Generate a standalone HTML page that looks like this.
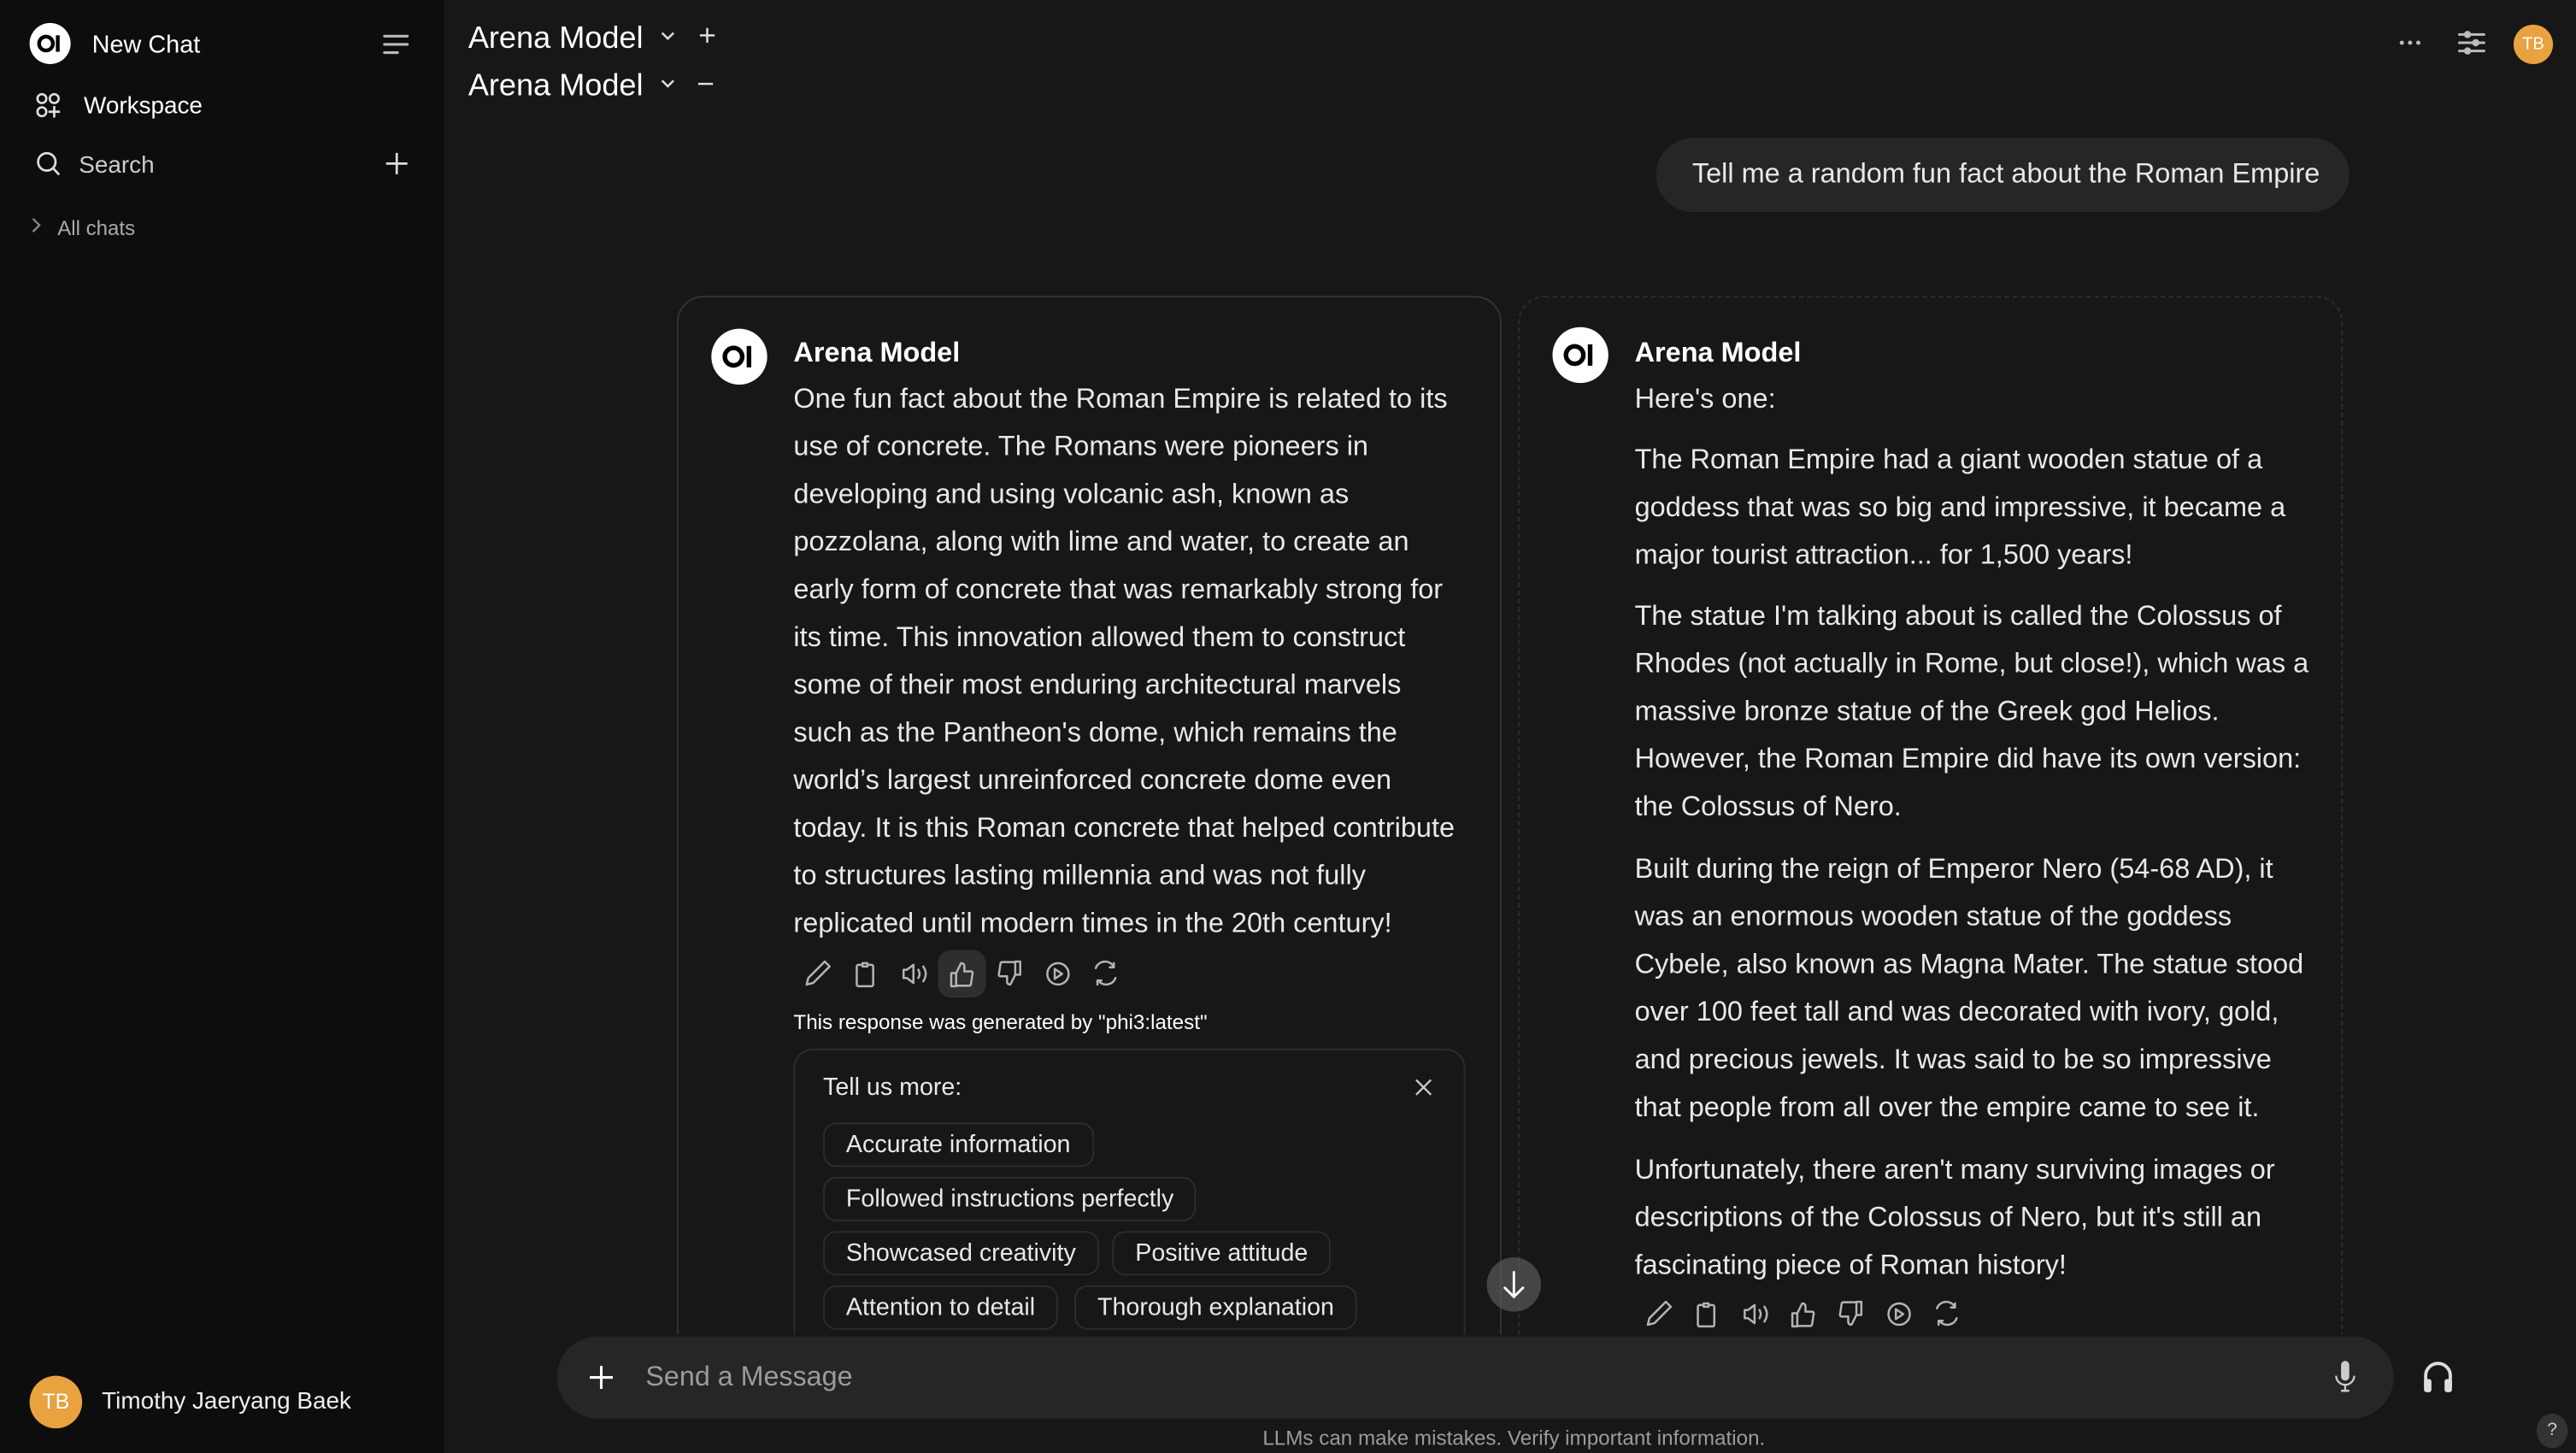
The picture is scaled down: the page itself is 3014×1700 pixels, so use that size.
<!DOCTYPE html>
<html><head><meta charset="utf-8">
<style>
html,body{margin:0;padding:0;background:#171717;overflow:hidden}
#root{position:absolute;left:0;top:0;width:1568px;height:884px;transform:scale(1.92219,1.92308);transform-origin:0 0;background:#171717;font-family:"Liberation Sans",sans-serif;color:#ececec;overflow:hidden}
.a{position:absolute;white-space:nowrap}
.side{position:absolute;left:0;top:0;width:270px;height:884px;background:#0d0d0d}
.t{position:absolute;white-space:nowrap;font-size:16.9px;line-height:29px;color:#e8e8e8}
.chip{position:absolute;border:1px solid #2c2c2c;border-radius:8px;font-size:14.9px;line-height:26px;padding:0 13px;color:#e8e8e8;box-sizing:border-box;height:27px}
svg{position:absolute;overflow:visible}
</style></head><body><div id="root">
<div class="side"></div>
<svg style="left:18px;top:14px" width="25" height="25" viewBox="0 0 25 25"><circle cx="12.5" cy="12.5" r="12.5" fill="#fff"/><circle cx="10" cy="12.5" r="4.2" fill="none" stroke="#000" stroke-width="2.3"/><rect x="16" y="7.5" width="2.3" height="10" fill="#000"/></svg>
<div class="a" style="left:56px;top:19px;font-size:15px;color:#fff">New Chat</div>
<svg style="left:233px;top:20px" width="16" height="14" viewBox="0 0 16 14" fill="none" stroke="#bbb" stroke-width="1.6" stroke-linecap="round"><path d="M1 2h14M1 7h14M1 12h8"/></svg>
<svg style="left:22px;top:56px" width="15" height="16" viewBox="0 0 15 16" fill="none" stroke="#ddd" stroke-width="1.4"><circle cx="3.5" cy="4" r="2.7"/><circle cx="11" cy="4" r="2.7"/><circle cx="3.5" cy="12" r="2.7"/><path d="M11 8.5v7M7.5 12h7"/></svg>
<div class="a" style="left:51px;top:57px;font-size:14.5px;color:#fff">Workspace</div>
<svg style="left:22px;top:92px" width="15" height="16" viewBox="0 0 15 16" fill="none" stroke="#ddd" stroke-width="1.4"><circle cx="6.5" cy="6.5" r="5.3"/><path d="M10.5 10.5l3.5 3.8"/></svg>
<div class="a" style="left:48px;top:93px;font-size:14.5px;color:#ccc">Search</div>
<svg style="left:235px;top:93px" width="13" height="13" viewBox="0 0 13 13" stroke="#ddd" stroke-width="1.4"><path d="M6.5 0v13M0 6.5h13"/></svg>
<svg style="left:19px;top:132px" width="6" height="10" viewBox="0 0 6 10" fill="none" stroke="#888" stroke-width="1.2"><path d="M1 1l4 4-4 4"/></svg>
<div class="a" style="left:35px;top:132px;font-size:12.5px;color:#aaa">All chats</div>
<div class="a" style="left:18px;top:837px;width:32px;height:32px;border-radius:50%;background:#e8a23f;color:#fff;font-size:13px;line-height:32px;text-align:center">TB</div>
<div class="a" style="left:62px;top:845px;font-size:14.5px;color:#eee">Timothy Jaeryang Baek</div>

<div class="a" style="left:285px;top:12px;font-size:18.8px;color:#fff">Arena Model</div>
<svg style="left:402px;top:19px" width="9" height="6" viewBox="0 0 9 6" fill="none" stroke="#ddd" stroke-width="1.3"><path d="M1 1l3.5 3.5L8 1"/></svg>
<svg style="left:426px;top:17px" width="9" height="9" viewBox="0 0 9 9" stroke="#ddd" stroke-width="1.3"><path d="M4.5 0v9M0 4.5h9"/></svg>
<div class="a" style="left:285px;top:41px;font-size:18.8px;color:#fff">Arena Model</div>
<svg style="left:402px;top:48px" width="9" height="6" viewBox="0 0 9 6" fill="none" stroke="#ddd" stroke-width="1.3"><path d="M1 1l3.5 3.5L8 1"/></svg>
<svg style="left:425px;top:50px" width="9" height="2" viewBox="0 0 9 2" stroke="#ddd" stroke-width="1.3"><path d="M0 1h9"/></svg>
<svg style="left:1460px;top:24px" width="14" height="4" viewBox="0 0 14 4" fill="#bbb"><circle cx="2" cy="2" r="1.3"/><circle cx="7" cy="2" r="1.3"/><circle cx="12" cy="2" r="1.3"/></svg>
<svg style="left:1496px;top:18px" width="17" height="16" viewBox="0 0 17 16" stroke="#bbb" stroke-width="1.6" stroke-linecap="round" fill="#bbb"><path d="M1 3h15M1 8h15M1 13h15"/><circle cx="6" cy="3" r="2.2" stroke="none"/><circle cx="11" cy="8" r="2.2" stroke="none"/><circle cx="6" cy="13" r="2.2" stroke="none"/></svg>
<div class="a" style="left:1530px;top:15px;width:24px;height:24px;border-radius:50%;background:#e8a23f;color:#fff;font-size:10.5px;line-height:24px;text-align:center">TB</div>

<div class="a" style="left:1008px;top:84px;width:422px;height:45px;border-radius:23px;background:#262626"></div>
<div class="a" style="left:1030px;top:96px;font-size:16.9px;color:#e8e8e8">Tell me a random fun fact about the Roman Empire</div>

<div class="a" style="left:270px;top:0;width:1298px;height:812px;overflow:hidden">
<div class="a" style="left:142px;top:180px;width:502px;height:700px;border:1px solid #333;border-radius:16px;box-sizing:border-box"></div>
<div class="a" style="left:654px;top:180px;width:502px;height:700px;border:1px dashed #2c2c2c;border-radius:16px;box-sizing:border-box"></div>
</div>

<svg style="left:433px;top:200px" width="34" height="34" viewBox="0 0 34 34"><circle cx="17" cy="17" r="17" fill="#fff"/><circle cx="13.5" cy="17" r="5.3" fill="none" stroke="#000" stroke-width="2.8"/><rect x="21.5" y="10.5" width="2.8" height="13" fill="#000"/></svg>
<div class="a" style="left:483px;top:205px;font-size:16.9px;font-weight:bold;color:#fff">Arena Model</div>
<div class="t" style="left:483px;top:228px">One fun fact about the Roman Empire is related to its</div>
<div class="t" style="left:483px;top:257px">use of concrete. The Romans were pioneers in</div>
<div class="t" style="left:483px;top:286px">developing and using volcanic ash, known as</div>
<div class="t" style="left:483px;top:315px">pozzolana, along with lime and water, to create an</div>
<div class="t" style="left:483px;top:344px">early form of concrete that was remarkably strong for</div>
<div class="t" style="left:483px;top:373px">its time. This innovation allowed them to construct</div>
<div class="t" style="left:483px;top:402px">some of their most enduring architectural marvels</div>
<div class="t" style="left:483px;top:431px">such as the Pantheon's dome, which remains the</div>
<div class="t" style="left:483px;top:460px">world’s largest unreinforced concrete dome even</div>
<div class="t" style="left:483px;top:489px">today. It is this Roman concrete that helped contribute</div>
<div class="t" style="left:483px;top:518px">to structures lasting millennia and was not fully</div>
<div class="t" style="left:483px;top:547px">replicated until modern times in the 20th century!</div>

<div class="a" style="left:571px;top:578px;width:29px;height:29px;border-radius:8px;background:#2e2e2e"></div>
<svg style="left:489px;top:584px" width="200" height="17" viewBox="0 0 200 17" fill="none" stroke="#b4b4b4" stroke-width="1.3" stroke-linejoin="round" stroke-linecap="round">
<path d="M2 15l1-4 10-10 3 3-10 10z"/>
<g transform="translate(3,0)"><path d="M32 3h-1.5a1 1 0 0 0-1 1v11a1 1 0 0 0 1 1h8a1 1 0 0 0 1-1V4a1 1 0 0 0-1-1H37M33 2h3v2h-3z"/></g>
<path d="M61 6h2l4-3v11l-4-3h-2zM70 6q1.5 2.5 0 5M73 4q3 4.5 0 9"/>
<path d="M90 8h3v8h-3zM93 8l3-6q2 0 2 2v3h4a1 1 0 0 1 1 1.2l-1 6.6a1 1 0 0 1-1 .9h-8"/>
<g transform="translate(10,0)"><path d="M119 1h3v8h-3zM119 9l-3 6q-2 0-2-2v-3h-4a1 1 0 0 1-1-1.2l1-6.6a1 1 0 0 1 1-.9h8"/></g>
<circle cx="155" cy="8.5" r="6.5"/><path d="M153 5.5v6l4.5-3z"/>
<path d="M178 5a6 6 0 0 1 10.5-1.5M189 2v2.5h-2.5M190 11a6 6 0 0 1-10.5 1.5M179 15v-2.5h2.5"/>
</svg>
<div class="a" style="left:483px;top:615px;font-size:12.6px;color:#fff">This response was generated by "phi3:latest"</div>

<div class="a" style="left:270px;top:0;width:1298px;height:812px;overflow:hidden">
<div class="a" style="left:213px;top:638px;width:409px;height:260px;border:1px solid #2c2c2c;border-radius:12px;box-sizing:border-box"></div>
</div>
<div class="a" style="left:501px;top:654px;font-size:14.9px;color:#e8e8e8">Tell us more:</div>
<svg style="left:862px;top:657px" width="9" height="9" viewBox="0 0 9 9" stroke="#ccc" stroke-width="1.2"><path d="M0 0l9 9M9 0l-9 9"/></svg>
<div class="chip" style="left:501px;top:683px">Accurate information</div>
<div class="chip" style="left:501px;top:716px">Followed instructions perfectly</div>
<div class="chip" style="left:501px;top:749px">Showcased creativity</div>
<div class="chip" style="left:677px;top:749px">Positive attitude</div>
<div class="chip" style="left:501px;top:782px">Attention to detail</div>
<div class="chip" style="left:654px;top:782px">Thorough explanation</div>

<svg style="left:945px;top:199px" width="34" height="34" viewBox="0 0 34 34"><circle cx="17" cy="17" r="17" fill="#fff"/><circle cx="13.5" cy="17" r="5.3" fill="none" stroke="#000" stroke-width="2.8"/><rect x="21.5" y="10.5" width="2.8" height="13" fill="#000"/></svg>
<div class="a" style="left:995px;top:205px;font-size:16.9px;font-weight:bold;color:#fff">Arena Model</div>
<div class="t" style="left:995px;top:228px">Here's one:</div>
<div class="t" style="left:995px;top:265px">The Roman Empire had a giant wooden statue of a</div>
<div class="t" style="left:995px;top:294px">goddess that was so big and impressive, it became a</div>
<div class="t" style="left:995px;top:323px">major tourist attraction... for 1,500 years!</div>
<div class="t" style="left:995px;top:360px">The statue I'm talking about is called the Colossus of</div>
<div class="t" style="left:995px;top:389px">Rhodes (not actually in Rome, but close!), which was a</div>
<div class="t" style="left:995px;top:418px">massive bronze statue of the Greek god Helios.</div>
<div class="t" style="left:995px;top:447px">However, the Roman Empire did have its own version:</div>
<div class="t" style="left:995px;top:476px">the Colossus of Nero.</div>
<div class="t" style="left:995px;top:514px">Built during the reign of Emperor Nero (54-68 AD), it</div>
<div class="t" style="left:995px;top:543px">was an enormous wooden statue of the goddess</div>
<div class="t" style="left:995px;top:572px">Cybele, also known as Magna Mater. The statue stood</div>
<div class="t" style="left:995px;top:601px">over 100 feet tall and was decorated with ivory, gold,</div>
<div class="t" style="left:995px;top:630px">and precious jewels. It was said to be so impressive</div>
<div class="t" style="left:995px;top:659px">that people from all over the empire came to see it.</div>
<div class="t" style="left:995px;top:697px">Unfortunately, there aren't many surviving images or</div>
<div class="t" style="left:995px;top:726px">descriptions of the Colossus of Nero, but it's still an</div>
<div class="t" style="left:995px;top:755px">fascinating piece of Roman history!</div>
<svg style="left:1001px;top:791px" width="200" height="17" viewBox="0 0 200 17" fill="none" stroke="#b4b4b4" stroke-width="1.3" stroke-linejoin="round" stroke-linecap="round">
<path d="M2 15l1-4 10-10 3 3-10 10z"/>
<g transform="translate(3,0)"><path d="M32 3h-1.5a1 1 0 0 0-1 1v11a1 1 0 0 0 1 1h8a1 1 0 0 0 1-1V4a1 1 0 0 0-1-1H37M33 2h3v2h-3z"/></g>
<path d="M61 6h2l4-3v11l-4-3h-2zM70 6q1.5 2.5 0 5M73 4q3 4.5 0 9"/>
<path d="M90 8h3v8h-3zM93 8l3-6q2 0 2 2v3h4a1 1 0 0 1 1 1.2l-1 6.6a1 1 0 0 1-1 .9h-8"/>
<g transform="translate(10,0)"><path d="M119 1h3v8h-3zM119 9l-3 6q-2 0-2-2v-3h-4a1 1 0 0 1-1-1.2l1-6.6a1 1 0 0 1 1-.9h8"/></g>
<circle cx="155" cy="8.5" r="6.5"/><path d="M153 5.5v6l4.5-3z"/>
<path d="M178 5a6 6 0 0 1 10.5-1.5M189 2v2.5h-2.5M190 11a6 6 0 0 1-10.5 1.5M179 15v-2.5h2.5"/>
</svg>

<div class="a" style="left:905px;top:765px;width:33px;height:33px;border-radius:50%;background:rgba(90,90,90,0.7)"></div>
<svg style="left:915px;top:773px" width="13" height="17" viewBox="0 0 13 17" fill="none" stroke="#fff" stroke-width="1.5" stroke-linecap="round"><path d="M6.5 1v15M1 10.5l5.5 5.5 5.5-5.5"/></svg>

<div class="a" style="left:339px;top:813px;width:1118px;height:50px;border-radius:25px;background:#262626"></div>
<svg style="left:359px;top:831px" width="14" height="14" viewBox="0 0 14 14" stroke="#fff" stroke-width="1.6"><path d="M7 0v14M0 7h14"/></svg>
<div class="a" style="left:393px;top:828px;font-size:16.8px;color:#9b9b9b">Send a Message</div>
<svg style="left:1421px;top:828px" width="13" height="20" viewBox="0 0 13 20" fill="#ccc"><rect x="4" y="0" width="5" height="12" rx="2.5"/><path d="M1 9a5.5 5.5 0 0 0 11 0" fill="none" stroke="#ccc" stroke-width="1.2"/><rect x="5.9" y="14" width="1.2" height="4"/><rect x="4" y="17.5" width="5" height="1.3"/></svg>
<svg style="left:1474px;top:827px" width="20" height="21" viewBox="0 0 20 21"><path d="M2.5 17V10a7.5 7.5 0 0 1 15 0v7" fill="none" stroke="#ddd" stroke-width="2"/><rect x="1.5" y="12" width="4.5" height="8" rx="1.5" fill="#ddd"/><rect x="14" y="12" width="4.5" height="8" rx="1.5" fill="#ddd"/></svg>
<div class="a" style="left:0;width:1843px;text-align:center;top:868px;font-size:12.6px;color:#9b9b9b">LLMs can make mistakes. Verify important information.</div>
<div class="a" style="left:1544px;top:860px;width:19px;height:21px;border-radius:50%;background:#333;color:#ccc;font-size:11px;line-height:21px;text-align:center">?</div>
</div></body></html>
